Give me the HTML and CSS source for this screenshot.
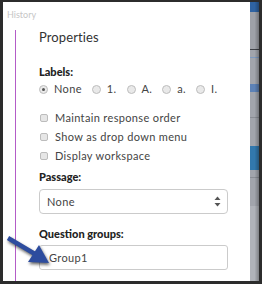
FILE: index.html
```html
<!DOCTYPE html>
<html lang="en">
<head>
  <meta charset="UTF-8" />
  <title>Properties</title>
  <link rel="stylesheet" href="styles.css">
</head>
<body>

<div class="frame">
  <!-- Properties panel -->
  <div class="panel">
    <div class="history">History</div>
    <div class="main">
      <div class="title">Properties</div>

      <div class="label labels">Labels:</div>
      <div class="radios">
        <span class="opt"><span class="radio on"></span>None</span>
        <span class="opt"><span class="radio"></span>1.</span>
        <span class="opt"><span class="radio"></span>A.</span>
        <span class="opt"><span class="radio"></span>a.</span>
        <span class="opt"><span class="radio"></span>I.</span>
      </div>

      <div class="checks">
        <div class="check"><span class="box"></span>Maintain response order</div>
        <div class="check"><span class="box"></span>Show as drop down menu</div>
        <div class="check"><span class="box"></span>Display workspace</div>
      </div>

      <div class="label passage">Passage:</div>
      <div class="select">
        <span>None</span>
        <svg width="7" height="11" viewBox="0 0 7 11">
          <path d="M3.5 0.5 L6.5 4 L0.5 4 Z" fill="#555"/>
          <path d="M3.5 10.5 L6.5 7 L0.5 7 Z" fill="#555"/>
        </svg>
      </div>

      <div class="label groups">Question groups:</div>
      <input class="field" type="text" value="Group1">
    </div>

    <!-- callout arrow -->
    <svg class="pointer" width="52" height="42" viewBox="0 0 52 42">
      <line x1="5" y1="6" x2="32" y2="22" stroke="#2d4c9e" stroke-width="4.5" />
      <polygon points="36,13 46,31 25,30" fill="#2d4c9e" />
    </svg>
  </div>

  <!-- app behind the panel -->
  <div class="backdrop"></div>
</div>

</body>
</html>
```

FILE: styles.css
```css
body {
  margin: 0;
  background: #2c2c2c;
  font-family: Lato, "Open Sans", sans-serif;
  color: #333;
}

.frame {
  display: flex;
  width: 256px;
  height: 279px;
  margin: 2px 3px 3px 3px;
}

.panel {
  position: relative;
  width: 247px;
  background: #fff;
  display: flex;
  flex-direction: column;
}

.history {
  height: 28px;
  box-sizing: border-box;
  padding: 8px 0 0 4px;
  font-size: 9px;
  line-height: 10px;
  color: #c6c6c6;
}

.main {
  flex: 1;
  margin-left: 12px;
  border-left: 1px solid #b45cc8;
  padding: 0 22px 0 23px;
  display: flex;
  flex-direction: column;
}

.title {
  font-size: 13px;
  line-height: 15px;
  color: #333;
  letter-spacing: 0.1px;
}

.label {
  font-size: 11px;
  font-weight: 900;
  line-height: 14px;
  color: #222;
}

.labels { margin-top: 20px; }
.passage { margin-top: 5px; }
.groups { margin-top: 13px; }

.radios {
  display: flex;
  gap: 10px;
  margin-top: 3px;
  font-size: 11px;
  line-height: 14px;
  letter-spacing: 0.35px;
  color: #444;
}

.opt {
  display: flex;
  align-items: center;
}

.radio {
  width: 7px;
  height: 7px;
  border: 1px solid #bdbdbd;
  border-radius: 50%;
  background: #e9e9e9;
  margin-right: 6px;
  display: flex;
  align-items: center;
  justify-content: center;
}

.radio.on::after {
  content: "";
  width: 3px;
  height: 3px;
  border-radius: 50%;
  background: #555;
}

.checks {
  margin-top: 12px;
  font-size: 11px;
  letter-spacing: 0.35px;
  color: #444;
}

.check {
  display: flex;
  align-items: center;
  height: 19px;
}

.box {
  width: 6px;
  height: 6px;
  border: 1px solid #bcbcbc;
  border-radius: 2px;
  background: #e6e6e6;
  margin: 0 7px 0 1px;
}

.select {
  margin-top: 5px;
  height: 25px;
  box-sizing: border-box;
  border: 1px solid #cbcbcb;
  border-radius: 4px;
  padding: 0 6px 0 7px;
  display: flex;
  align-items: center;
  justify-content: space-between;
  font-size: 11px;
  letter-spacing: 0.35px;
  color: #444;
}

.field {
  margin: 4px 0 0 0;
  height: 25px;
  width: 100%;
  box-sizing: border-box;
  border: 1px solid #cbcbcb;
  border-radius: 3px;
  padding: 0 0 0 9px;
  font-family: Lato, "Open Sans", sans-serif;
  font-size: 11px;
  letter-spacing: 0.35px;
  color: #444;
  outline: none;
}

.pointer {
  position: absolute;
  left: 0;
  top: 230px;
  filter: drop-shadow(1px 2px 1.5px rgba(0, 0, 0, 0.6));
}

.backdrop {
  width: 9px;
  background:
    linear-gradient(to right, rgba(0, 0, 0, 0) 50%, rgba(0, 0, 0, 0.28) 100%),
    linear-gradient(to bottom,
      #2f63a2 0, #2f63a2 10px,
      #9ea1a8 10px, #9ea1a8 47px,
      #3f4248 47px, #3f4248 48px,
      #a2a5ac 48px, #a2a5ac 55px,
      #7d9ac0 55px, #7d9ac0 56px,
      #a2a5ac 56px, #a2a5ac 82px,
      #5d82b6 82px, #5d82b6 90px,
      #a2a5ac 90px, #a2a5ac 115px,
      #8a8d94 115px, #8a8d94 116px,
      #a2a5ac 116px, #a2a5ac 144px,
      #3278ad 144px, #3278ad 168px,
      #a2a5ac 168px, #a2a5ac 175px,
      #8a8d94 175px, #8a8d94 176px,
      #a2a5ac 176px, #a2a5ac 204px,
      #b0b3b9 204px, #b0b3b9 100%);
}
```
